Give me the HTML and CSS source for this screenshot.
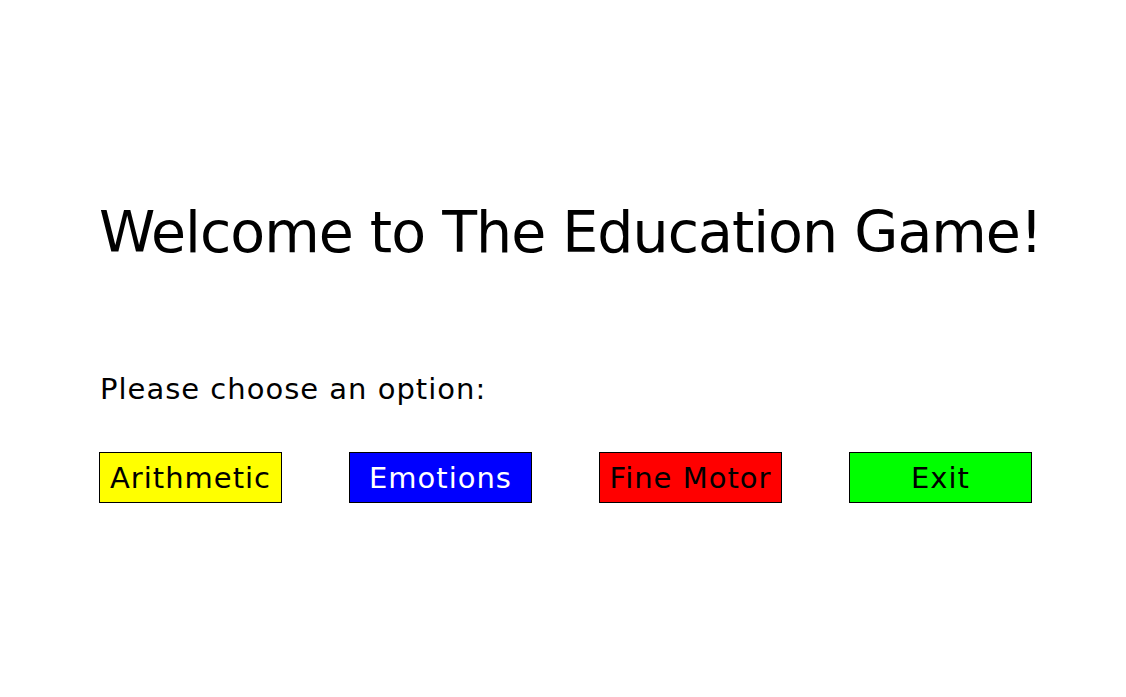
FILE: index.html
```html
<!DOCTYPE html>
<html>
<head>
<meta charset="utf-8">
<link rel="stylesheet" href="styles.css">
</head>
<body>
<main class="screen">
  <h1 class="title">Welcome to The Education Game!</h1>
  <p class="prompt">Please choose an option:</p>
  <div class="options">
    <button class="opt opt-yellow">Arithmetic</button>
    <button class="opt opt-blue">Emotions</button>
    <button class="opt opt-red">Fine Motor</button>
    <button class="opt opt-green">Exit</button>
  </div>
</main>
</body>
</html>
```
FILE: styles.css
```css
html, body {
  margin: 0;
  padding: 0;
  background: #ffffff;
}
.screen {
  width: 1126px;
  height: 697px;
  box-sizing: border-box;
  padding: 194px 0 0 99px;
  font-family: "DejaVu Sans", sans-serif;
  color: #000;
}
.title {
  margin: 0;
  font-weight: normal;
  font-size: 57px;
  line-height: 76px;
  letter-spacing: -1px;
  white-space: nowrap;
}
.prompt {
  margin: 102px 0 0 1px;
  font-size: 29px;
  line-height: 34px;
  letter-spacing: 1px;
}
.options {
  display: flex;
  gap: 67px;
  margin-top: 46px;
}
.opt {
  width: 183px;
  height: 51px;
  box-sizing: border-box;
  border: 1px solid #000;
  border-radius: 0;
  padding: 0;
  margin: 0;
  font-family: "DejaVu Sans", sans-serif;
  font-size: 29px;
  letter-spacing: 1px;
  color: #000;
  text-align: center;
}
.opt-yellow { background: #ffff00; }
.opt-blue { background: #0000ff; color: #fff; }
.opt-red { background: #ff0000; }
.opt-green { background: #00ff00; }
```
